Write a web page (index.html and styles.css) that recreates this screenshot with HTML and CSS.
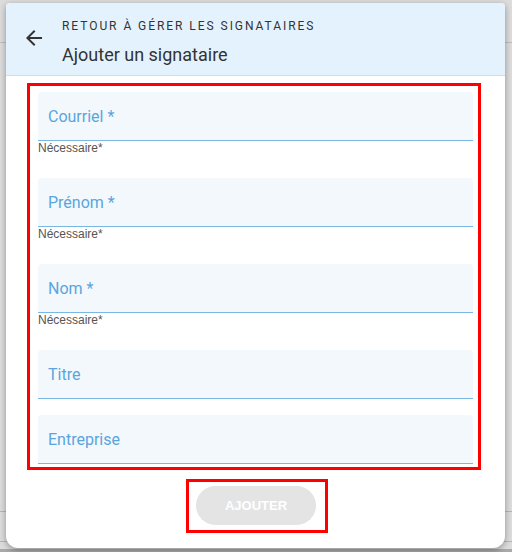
FILE: index.html
```html
<!DOCTYPE html>
<html lang="fr">
<head>
  <meta charset="UTF-8">
  <meta name="viewport" content="width=device-width, initial-scale=1.0">
  <title>Ajouter un signataire</title>
  <link rel="stylesheet" href="styles.css">
</head>
<body>
  <div class="dialog">
    <!-- Header -->
    <div class="dialog-header">
      <button class="back-button" aria-label="Retour">
        <svg width="24" height="24" viewBox="0 0 24 24"><path d="M20 11H7.83l5.59-5.59L12 4l-8 8 8 8 1.41-1.41L7.83 13H20v-2z" fill="#333"/></svg>
      </button>
      <div class="header-text">
        <div class="eyebrow">Retour à gérer les signataires</div>
        <div class="title">Ajouter un signataire</div>
      </div>
    </div>

    <!-- Form -->
    <div class="dialog-body">
      <div class="form-box">
        <div class="field-group">
          <div class="field"><span class="field-label">Courriel *</span></div>
          <div class="helper">Nécessaire*</div>
        </div>
        <div class="field-group">
          <div class="field"><span class="field-label">Prénom *</span></div>
          <div class="helper">Nécessaire*</div>
        </div>
        <div class="field-group">
          <div class="field"><span class="field-label">Nom *</span></div>
          <div class="helper">Nécessaire*</div>
        </div>
        <div class="field-group plain">
          <div class="field"><span class="field-label">Titre</span></div>
        </div>
        <div class="field-group last">
          <div class="field"><span class="field-label">Entreprise</span></div>
        </div>
      </div>

      <div class="actions">
        <div class="button-box">
          <button class="add-button" disabled>Ajouter</button>
        </div>
      </div>
    </div>
  </div>
</body>
</html>
```

FILE: styles.css
```css
body {
  margin: 0;
  height: 552px;
  overflow: hidden;
  font-family: Roboto, "Liberation Sans", sans-serif;
  background:
    linear-gradient(#bdbdbd, #bdbdbd) 0 42px / 100% 1px no-repeat,
    linear-gradient(#b5b5b5, #b5b5b5) 0 511px / 100% 1px no-repeat,
    linear-gradient(#b5b5b5, #b5b5b5) 0 541px / 100% 1px no-repeat,
    linear-gradient(#a9a9a9, #a9a9a9) 0 549px / 100% 3px no-repeat,
    #dcdcdc;
}

.dialog {
  margin: 3px 7px 0 6px;
  height: 545px;
  background: #fff;
  border-radius: 4px 4px 12px 12px;
  box-shadow: 0 2px 6px rgba(0, 0, 0, 0.35);
  overflow: hidden;
  display: flex;
  flex-direction: column;
}

/* Header */
.dialog-header {
  height: 72px;
  background: #e4f2fd;
  border-bottom: 1px solid #d3dde6;
  display: flex;
  align-items: flex-start;
}

.back-button {
  width: 24px;
  height: 24px;
  padding: 0;
  margin: 23px 16px 0 16px;
  border: none;
  background: none;
  display: flex;
}

.header-text {
  display: flex;
  flex-direction: column;
  padding-top: 15px;
}

.eyebrow {
  font-size: 12px;
  text-transform: uppercase;
  letter-spacing: 1.95px;
  color: #333;
  line-height: 16px;
}

.title {
  font-size: 18px;
  color: #333;
  line-height: 24px;
  margin-top: 9px;
}

/* Form */
.dialog-body {
  padding: 7px 24px 0 21px;
}

.form-box {
  border: 3px solid #f00;
  padding: 6px 5px 3px 8px;
}

.field-group {
  display: flex;
  flex-direction: column;
}

.field-group.plain {
  margin-bottom: 16px;
}

.field {
  height: 48px;
  background: #f3f8fc;
  border-bottom: 1px solid #7ab8e3;
  border-radius: 4px 4px 0 0;
  display: flex;
  align-items: center;
  padding-left: 10px;
}

.field-label {
  font-size: 16px;
  color: #5aa5de;
}

.helper {
  font-family: "Liberation Sans", Arial, sans-serif;
  font-size: 12px;
  color: #555;
  line-height: 14px;
  height: 37px;
}

/* Actions */
.actions {
  display: flex;
  justify-content: center;
  padding-top: 9px;
  padding-left: 6px;
}

.button-box {
  border: 3px solid #f00;
  padding: 4px 9px 5px 7px;
}

.add-button {
  width: 120px;
  height: 39px;
  border: none;
  border-radius: 20px;
  background: #e4e4e4;
  color: #fff;
  font-family: "Liberation Sans", Arial, sans-serif;
  font-weight: bold;
  font-size: 13px;
  text-transform: uppercase;
  display: block;
}
```
